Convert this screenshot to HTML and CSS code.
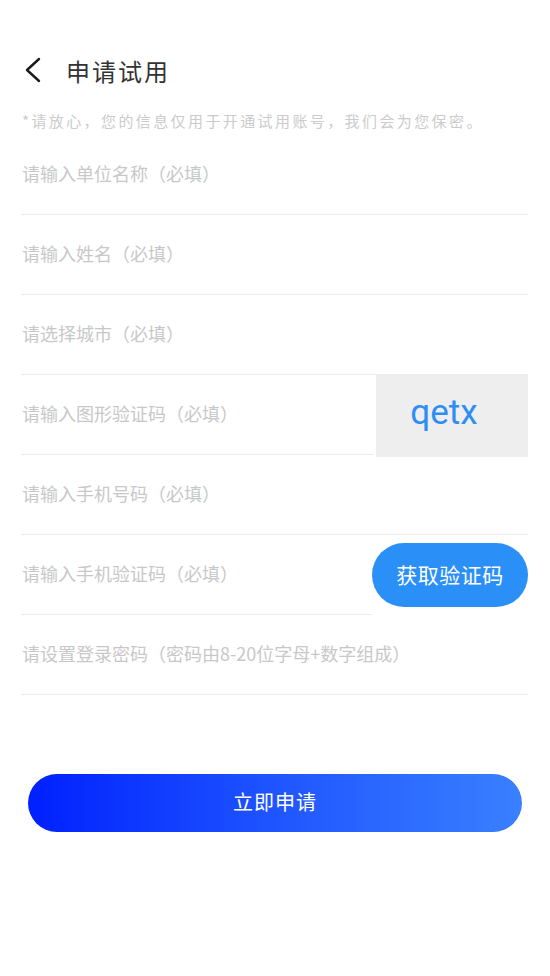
FILE: index.html
```html
<!DOCTYPE html>
<html lang="zh">
<head>
<meta charset="utf-8">
<title>申请试用</title>
<link rel="stylesheet" href="styles.css">
</head>
<body>
<div class="page">
  <header class="header">
    <svg class="back" width="20" height="28" viewBox="0 0 20 28"><polyline points="15,3 3,14 15,25" fill="none" stroke="#1a1a1a" stroke-width="2.4" stroke-linecap="round" stroke-linejoin="round"/></svg>
    <h1 class="title">申请试用</h1>
  </header>
  <p class="notice">*请放心，您的信息仅用于开通试用账号，我们会为您保密。</p>
  <form class="form">
    <div class="row"><div class="field">请输入单位名称（必填）</div></div>
    <div class="row"><div class="field">请输入姓名（必填）</div></div>
    <div class="row"><div class="field">请选择城市（必填）</div></div>
    <div class="row split">
      <div class="field">请输入图形验证码（必填）</div>
      <div class="captcha">qetx</div>
    </div>
    <div class="row"><div class="field">请输入手机号码（必填）</div></div>
    <div class="row split">
      <div class="field short">请输入手机验证码（必填）</div>
      <div class="code-btn">获取验证码</div>
    </div>
    <div class="row"><div class="field">请设置登录密码（密码由8-20位字母+数字组成）</div></div>
  </form>
  <div class="submit-wrap"><div class="submit">立即申请</div></div>
</div>
</body>
</html>
```
FILE: styles.css
```css
html, body {
  margin: 0;
  padding: 0;
  background: #fff;
}
body {
  font-family: "Noto Sans CJK SC", "Noto Sans", sans-serif;
  color: #333;
}
.page {
  width: 550px;
  padding: 0 22px 0 21px;
  box-sizing: border-box;
}
.header {
  display: flex;
  align-items: center;
  height: 48px;
  margin-top: 46px;
}
.back {
  margin-left: 3px;
  flex: none;
}
.title {
  margin: 0 0 0 22px;
  font-size: 24px;
  font-weight: 400;
  letter-spacing: 2px;
  color: #333;
}
.notice {
  margin: 0 0 0 1px;
  height: 41px;
  line-height: 20px;
  padding-top: 17px;
  box-sizing: border-box;
  font-size: 15px;
  letter-spacing: 2.4px;
  color: #cbcbcb;
  white-space: nowrap;
}
.form {
  display: flex;
  flex-direction: column;
}
.row {
  display: flex;
  height: 80px;
}
.field {
  flex: 1;
  display: flex;
  align-items: center;
  padding-left: 1px;
  padding-bottom: 3px;
  border-bottom: 1px solid #ececec;
  font-size: 18px;
  color: #c8c8c8;
  white-space: nowrap;
}
.split .field {
  flex: none;
  width: 352px;
}
.split .field.short {
  width: 350px;
}
.captcha {
  margin-left: 2px;
  flex: 1;
  height: 82px;
  background: #eeeeee;
  display: flex;
  align-items: center;
  justify-content: center;
  font-family: Roboto, "Noto Sans", sans-serif;
  font-size: 35px;
  color: #2f8ef4;
  padding: 0 16px 8px 0;
  box-sizing: border-box;
}
.code-btn {
  align-self: center;
  flex: 1;
  height: 64px;
  border-radius: 32px;
  background: #2b8ff8;
  color: #fff;
  font-size: 21px;
  letter-spacing: 0.5px;
  display: flex;
  align-items: center;
  justify-content: center;
  padding-bottom: 2px;
  box-sizing: border-box;
}
.submit-wrap {
  padding: 79px 6px 0 7px;
}
.submit {
  height: 58px;
  border-radius: 29px;
  background: linear-gradient(90deg, #0020ff 0%, #1f55ff 50%, #3a80ff 100%);
  color: #fff;
  font-size: 20px;
  letter-spacing: 1px;
  display: flex;
  align-items: center;
  justify-content: center;
  padding-bottom: 3px;
  box-sizing: border-box;
}
```
